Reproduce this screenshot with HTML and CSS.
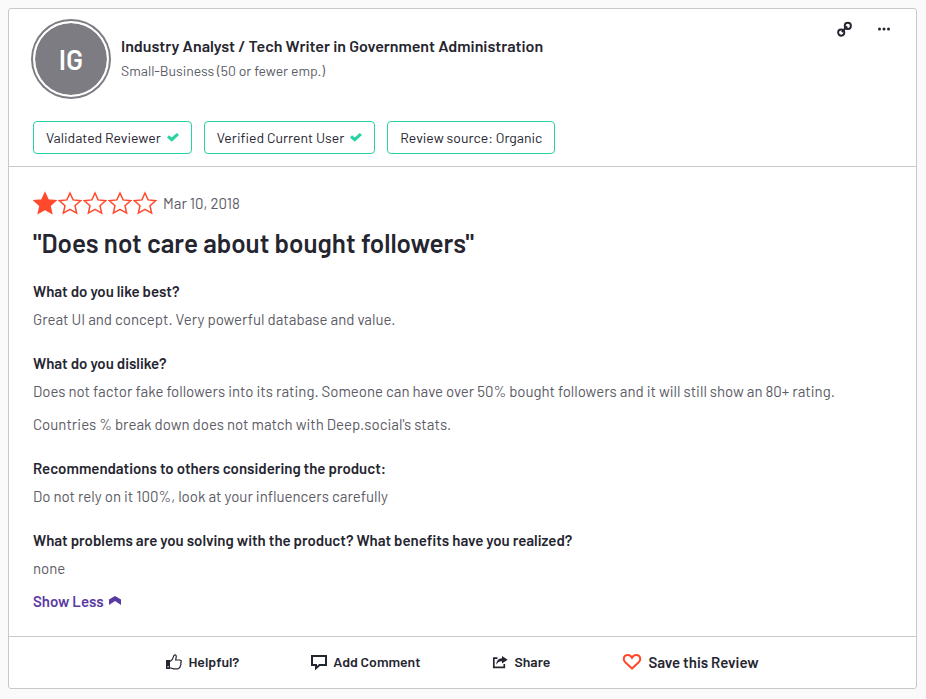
FILE: index.html
```html
<!DOCTYPE html>
<html lang="en">
<head>
<meta charset="utf-8">
<meta name="viewport" content="width=device-width, initial-scale=1">
<title>Product review</title>
<link rel="stylesheet" href="styles.css">
</head>
<body>
<svg class="symbols" aria-hidden="true">
  <symbol id="star" viewBox="0 0 24 24"><path d="M12 2l3.100 6.900 7.500.8-5.600 5 1.600 7.400-6.600-3.800-6.600 3.800 1.600-7.400-5.600-5 7.500-.8z"/></symbol>
  <symbol id="check" viewBox="0 0 12 9"><path d="M0 4.400L2 2.200 4.700 4.600 9.800 0 12 2 4.800 8.800z"/></symbol>
</svg>
<article class="card">
  <header class="head">
    <div class="top">
      <div class="avatar">IG</div>
      <div class="who">
        <h2 class="name">Industry Analyst / Tech Writer in Government Administration</h2>
        <p class="size">Small-Business (50 or fewer emp.)</p>
      </div>
      <div class="tools">
        <button class="tool" type="button" aria-label="Copy link">
          <svg width="16" height="16" viewBox="0 0 16 16" fill="none" stroke="#252530" stroke-width="1.900"><circle cx="4.200" cy="11.600" r="3.100"/><circle cx="10.800" cy="4.900" r="3.100"/><path d="M4.800 11L10.200 5.500" stroke-width="1.800"/></svg>
        </button>
        <button class="tool" type="button" aria-label="More options">
          <svg width="12" height="4" viewBox="0 0 12 4" fill="#252530"><circle cx="1.500" cy="2" r="1.500"/><circle cx="6" cy="2" r="1.500"/><circle cx="10.500" cy="2" r="1.500"/></svg>
        </button>
      </div>
    </div>
    <ul class="badges">
      <li class="badge">Validated Reviewer <svg class="check"><use href="#check"/></svg></li>
      <li class="badge">Verified Current User <svg class="check"><use href="#check"/></svg></li>
      <li class="badge">Review source: Organic</li>
    </ul>
  </header>
  <div class="body">
    <div class="rating">
      <div class="stars" role="img" aria-label="1 out of 5 stars">
        <svg class="star full"><use href="#star"/></svg>
        <svg class="star"><use href="#star"/></svg>
        <svg class="star"><use href="#star"/></svg>
        <svg class="star"><use href="#star"/></svg>
        <svg class="star"><use href="#star"/></svg>
      </div>
      <time datetime="2018-03-10">Mar 10, 2018</time>
    </div>
    <h1 class="title">"Does not care about bought followers"</h1>
    <section class="answer">
      <h3>What do you like best?</h3>
      <p>Great UI and concept. Very powerful database and value.</p>
    </section>
    <section class="answer">
      <h3>What do you dislike?</h3>
      <p>Does not factor fake followers into its rating. Someone can have over 50% bought followers and it will still show an 80+ rating.</p>
      <p>Countries % break down does not match with Deep.social's stats.</p>
    </section>
    <section class="answer">
      <h3>Recommendations to others considering the product:</h3>
      <p>Do not rely on it 100%, look at your influencers carefully</p>
    </section>
    <section class="answer">
      <h3>What problems are you solving with the product? What benefits have you realized?</h3>
      <p>none</p>
    </section>
    <button class="less" type="button">Show Less
      <svg class="chevron" width="12" height="9" viewBox="0 0 12 9" fill="#5a39a2"><path d="M6 0l6 3.500V9L6 5 0 9V3.500z"/></svg>
    </button>
  </div>
  <footer class="actions">
    <button class="action" type="button">
      <svg width="16" height="16" viewBox="0 0 16 16"><path d="M0 6h4v9H0z" fill="#252530"/><path d="M4 7.500c2-1 3-2.700 3.300-4.500C7.500 1.600 7.900.8 8.900.8c1.100 0 1.500 1 1.300 2.200L9.700 6h3.800c1.300 0 1.900.8 1.700 1.700l-.5 1.200.3 1.600-.7 1.100-.1 1.400-1 .7c0 .8-.7 1.200-1.500 1.200H7.500L4 13.700" fill="none" stroke="#252530" stroke-width="1.200"/><circle cx="2.100" cy="12.800" r=".7" fill="#fff"/></svg>
      Helpful?
    </button>
    <button class="action" type="button">
      <svg width="16" height="16" viewBox="0 0 16 16" fill="none" stroke="#252530" stroke-width="2"><path d="M1 2h14v9H8.500L5 14.200V11H1z"/></svg>
      Add Comment
    </button>
    <button class="action" type="button">
      <svg width="16" height="14" viewBox="0 0 16 14"><path d="M5.500 3.200H1.800v9.200h10.500V9" fill="none" stroke="#252530" stroke-width="1.700"/><path d="M10 1l5.700 3.800L10 8.600V6.300C7.500 6.100 5.700 7.200 4.300 9.700 4.400 5.700 6.400 3.400 10 3.200z" fill="#252530"/></svg>
      Share
    </button>
    <button class="action save" type="button">
      <svg width="20" height="18" viewBox="0 0 20 18" fill="none" stroke="#ff492c" stroke-width="2"><path d="M10 15.500L2.800 8.700C.7 6.300 1.800 2 5.600 2 7.600 2 9 3 10 4.700 11 3 12.400 2 14.400 2c3.800 0 4.900 4.300 2.800 6.700z"/></svg>
      Save this Review
    </button>
  </footer>
</article>
</body>
</html>
```

FILE: styles.css
```css
* { box-sizing: border-box; }
body {
  margin: 8px 9px 10px 8px;
  background: #fafafa;
  color: #252530;
  font: 400 15px/24px Barlow, Roboto, sans-serif;
}
h1, h2, h3, p, ul { margin: 0; padding: 0; }
button {
  padding: 0;
  border: 0;
  background: none;
  color: inherit;
  font: inherit;
  cursor: pointer;
}
.symbols { position: absolute; width: 0; height: 0; }
.card {
  background: #fff;
  border: 1px solid #c8c8c8;
  border-radius: 3px;
}
.head {
  padding: 12px 24px;
  border-bottom: 1px solid #c8c8c8;
}
.top { display: flex; gap: 12px; }
.avatar {
  display: flex;
  align-items: center;
  justify-content: center;
  flex: none;
  width: 76px;
  height: 76px;
  border: 2px solid #fff;
  border-radius: 50%;
  background: #7c7c82 padding-box;
  box-shadow: 0 0 0 2px #7c7c82;
  color: #fff;
  font-size: 28px;
  font-weight: 600;
}
.who { flex: 1; padding-top: 13px; }
.name { margin-bottom: 1px; font-size: 16px; font-weight: 600; line-height: 24px; }
.size { font-size: 14px; color: #5c5c66; }
.tools { display: flex; gap: 25px; height: 16px; padding-right: 2px; }
.tool { display: flex; align-items: center; }
.badges {
  display: flex;
  flex-wrap: wrap;
  gap: 12px;
  margin-top: 24px;
  list-style: none;
}
.badge {
  display: flex;
  align-items: center;
  gap: 6px;
  height: 33px;
  padding: 0 12px;
  border: 1px solid #27d3a2;
  border-radius: 4px;
  font-size: 14px;
}
.check { width: 12px; height: 9px; fill: #27d3a2; }
.body {
  padding: 24px 24px 23px;
}
.rating { display: flex; align-items: center; gap: 6px; }
.stars { display: flex; gap: 1px; }
.star {
  width: 24px;
  height: 24px;
  fill: none;
  stroke: #ff492c;
  stroke-width: 1.5px;
}
.full { fill: #ff492c; }
time { color: #5c5c66; }
.title {
  margin: 12px 0 20px;
  font-size: 26px;
  font-weight: 600;
  line-height: 32px;
}
.answer { margin-bottom: 20px; }
.answer h3 { margin-bottom: 4px; font-size: 15px; font-weight: 600; }
.answer p { color: #5c5c66; }
.answer p + p { margin-top: 9px; }
.answer:last-of-type { margin-bottom: 9px; }
.less {
  display: flex;
  align-items: center;
  gap: 5px;
  color: #5a39a2;
  font-weight: 600;
}
.chevron { margin-bottom: 2px; }
.actions {
  display: flex;
  flex-wrap: wrap;
  justify-content: center;
  gap: 12px 72px;
  padding: 13px 24px 14px;
  border-top: 1px solid #c8c8c8;
}
.action {
  display: flex;
  align-items: center;
  gap: 6px;
  font-size: 14px;
  font-weight: 600;
}
.save { font-size: 15px; }
```
